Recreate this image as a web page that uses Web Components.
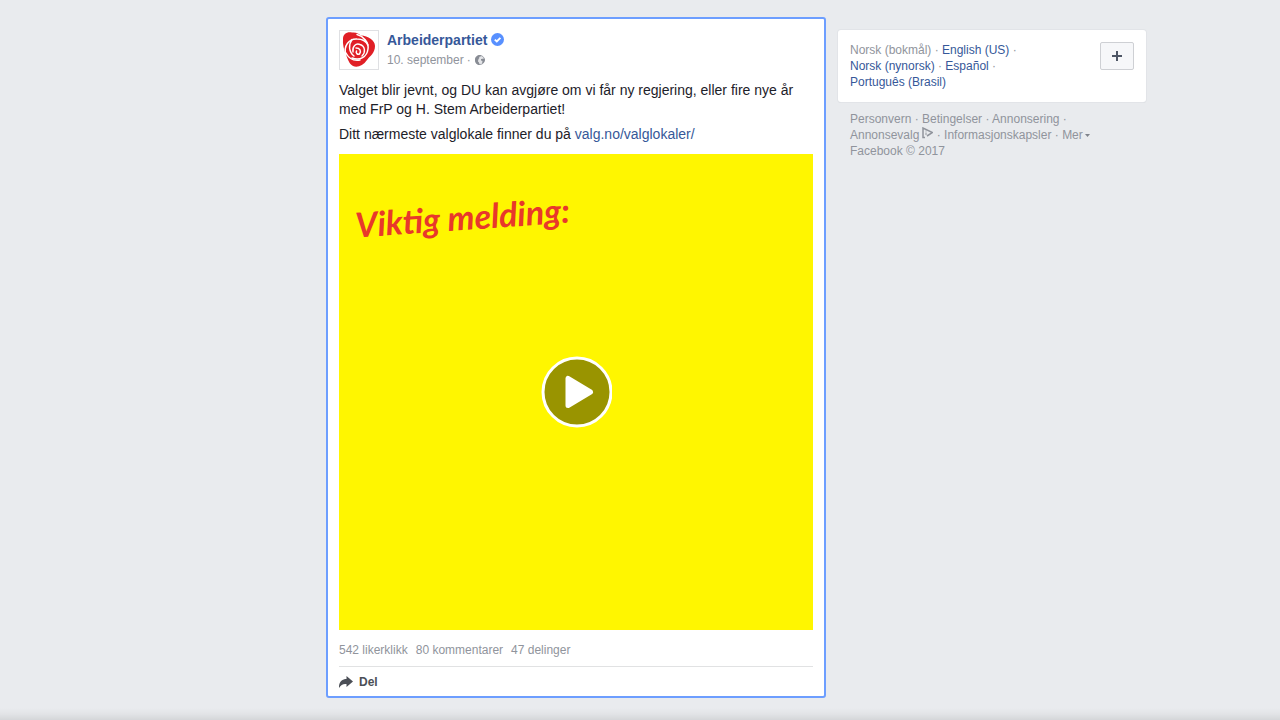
<!DOCTYPE html>
<html lang="nb">
<head>
<meta charset="utf-8">
<meta name="viewport" content="width=device-width, initial-scale=1">
<title>Arbeiderpartiet</title>
<style>
  html { background: #e9ebee; }
  body { margin: 0; font: 12px/16px "Liberation Sans", Arial, sans-serif; color: #1d2129; }
</style>
</head>
<body>
<post-page>
  <feed-post author="Arbeiderpartiet" date="10. september">
    <p>Valget blir jevnt, og DU kan avgjøre om vi får ny regjering, eller fire nye år med FrP og H. Stem Arbeiderpartiet!</p>
    <p>Ditt nærmeste valglokale finner du på <a href="#valg">valg.no/valglokaler/</a></p>
    <video-cover slot="media">Viktig melding:</video-cover>
    <span slot="stats">542 likerklikk</span>
    <span slot="stats">80 kommentarer</span>
    <span slot="stats">47 delinger</span>
  </feed-post>
  <language-card slot="side"></language-card>
  <site-links slot="side"></site-links>
</post-page>

<script>
class BaseElement extends HTMLElement {
  constructor() {
    super();
    this.attachShadow({ mode: 'open' }).innerHTML = this.constructor.markup;
  }
}

customElements.define('post-page', class extends BaseElement {
  static markup = `
    <style>
      :host { display: flex; flex-direction: column; min-height: 100vh; }
      .columns { flex: 1; display: flex; justify-content: center; align-items: flex-start; gap: 12px;
                 padding: 17px 0 0 192px; }
      main { flex: 0 1 500px; min-width: 0; }
      aside { flex: 0 1 308px; padding-top: 13px; }
      .edge { height: 12px; background: linear-gradient(rgba(0,0,0,0), rgba(0,0,0,.03) 50%, rgba(0,0,0,.09)); }
    </style>
    <div class="columns">
      <main><slot></slot></main>
      <aside><slot name="side"></slot></aside>
    </div>
    <div class="edge"></div>`;
});

customElements.define('party-logo', class extends BaseElement {
  static markup = `
    <style>
      :host { display: block; box-sizing: border-box; width: 40px; height: 40px; background: #fff; border: 1px solid #dfe0e3; }
      svg { display: block; width: 100%; height: 100%; }
    </style>
    <svg viewBox="1 1 38 38" aria-hidden="true">
      <path fill="#e01f26" d="M4 9C4 4 8 1.500 13 2.500C17 2 20 3.500 22 5.500C29 6 36 10 36 16C36 23 31 26 28 30C24 36 18 38 14 36C10 34 9 29 7 25C5 20 3.500 14 4 9Z"/>
      <g fill="none" stroke="#fff" stroke-linecap="round">
        <path stroke-width="1.500" d="M7 25C4 16 10 8.500 18 9C23 9 27 11 29 15"/>
        <path stroke-width="1.500" d="M18 4.500C24 6 30 12 29 19C28 27 21 31 13 28"/>
        <path stroke-width="1.400" d="M13 9.500C9 15 10 22 15 26"/>
        <path stroke-width="1.300" d="M7 23C10 29 15 31 21 30"/>
        <path stroke-width="1.400" d="M14 22C13 16 17 13 21 14.500C26 16 27 22 23 26"/>
        <path stroke-width="1.500" d="M17 18C21 18 22.500 21 20.500 24C18.500 25 16.500 23 17.500 21"/>
      </g>
    </svg>`;
});

customElements.define('video-cover', class extends BaseElement {
  static markup = `
    <style>
      :host { display: block; position: relative; aspect-ratio: 474 / 476; background: #fff600; overflow: hidden; }
      .caption { padding: 43px 0 0 16px; }
      .caption span { display: inline-block; font: italic 700 34px/40px Lato, "Liberation Sans", sans-serif; color: #e8382b;
                      transform: rotate(-4deg); }
      button { position: absolute; inset: 0; width: 100%; display: grid; place-items: center; padding: 0;
               border: 0; background: none; cursor: pointer; }
      svg { display: block; width: 72px; height: 72px; }
    </style>
    <div class="caption"><span><slot></slot></span></div>
    <button type="button" aria-label="Spill av">
      <svg viewBox="0 0 72 72" aria-hidden="true">
        <circle cx="37" cy="36" r="34" fill="#999400" stroke="#fff" stroke-width="3"/>
        <path fill="#fff" stroke="#fff" stroke-width="5" stroke-linejoin="round" d="M28 22.500V49.500L50.500 36Z"/>
      </svg>
    </button>`;
});

customElements.define('feed-post', class extends BaseElement {
  static markup = `
    <style>
      :host { display: block; box-sizing: border-box; background: #fff; border: 2px solid #6d9eff; border-radius: 3px;
              padding: 11px 11px 6px; }
      header { display: flex; gap: 8px; }
      a { text-decoration: none; color: inherit; }
      .name { display: flex; align-items: center; gap: 4px; font-size: 14px; line-height: 20px; font-weight: 700; color: #365899; }
      .date { display: flex; align-items: center; gap: 3px; line-height: 20px; color: #90949c; }
      svg { display: block; }
      .name svg { padding-bottom: 2px; }
      .text { font-size: 14px; line-height: 19px; margin: 11px 0 10px; }
      ::slotted(p) { margin: 0 0 6px; }
      ::slotted(p:last-of-type) { margin: 0; }
      .stats { display: flex; gap: 8px; padding: 12px 0 8px; color: #90949c; border-bottom: 1px solid #e1e2e3; }
      button { display: flex; align-items: center; gap: 6px; margin: 7px 0 0; padding: 0; border: 0; background: none;
               font: 700 12px/16px "Liberation Sans", Arial, sans-serif; color: #4b4f56; cursor: pointer; }
    </style>
    <article>
      <header>
        <party-logo></party-logo>
        <div>
          <div class="name"><a href="#author"></a>
            <svg width="13" height="13" viewBox="0 0 13 13" aria-hidden="true">
              <circle cx="6.500" cy="6.500" r="6.500" fill="#5890ff"/>
              <path d="M3.800 6.600L5.800 8.500L9.400 4.800" fill="none" stroke="#fff" stroke-width="1.900"/>
            </svg>
          </div>
          <div class="date"><a href="#date"></a><span>·</span>
            <svg width="12" height="12" viewBox="0 0 12 12" aria-hidden="true">
              <circle cx="6" cy="6" r="4.500" fill="#e4e5e8" stroke="#a3a6ad" stroke-width="1"/>
              <path fill="#888c94" d="M6.500 1C3 1 1 3 1 6C1 9 3 11 6 11C5 10 5.500 8.500 4 7.500C4 6 4.500 4.500 5.500 4L5 3L7.500 2ZM7 5L10.500 4.500L11 6L9.500 9L8 9.500L8.500 7L7 6.500Z"/>
            </svg>
          </div>
        </div>
      </header>
      <div class="text"><slot></slot></div>
      <slot name="media"></slot>
      <div class="stats"><slot name="stats"></slot></div>
      <button type="button">
        <svg width="14" height="12" viewBox="0 0 14 12" aria-hidden="true">
          <path fill="#4b4f56" d="M7.500 0L14 5.500L7.500 11V8C4.500 7.500 2 8.500 0 12C-.5 6.500 3 3 7.500 3Z"/>
        </svg>
        <span>Del</span>
      </button>
    </article>`;
  connectedCallback() {
    this.shadowRoot.querySelector('.name a').textContent = this.getAttribute('author');
    this.shadowRoot.querySelector('.date a').textContent = this.getAttribute('date');
    for (const link of this.querySelectorAll('a')) {
      link.style.color = '#365899';
      link.style.textDecoration = 'none';
    }
  }
});

customElements.define('language-card', class extends BaseElement {
  static markup = `
    <style>
      :host { display: flex; gap: 12px; justify-content: space-between; align-items: flex-start; padding: 12px;
              background: #fff; border-radius: 3px; box-shadow: 0 0 0 1px #e2e4e8, 0 1px 0 #cfd1d5; color: #90949c; }
      a { color: #365899; text-decoration: none; white-space: nowrap; }
      button { flex: none; display: grid; place-items: center; box-sizing: border-box; width: 34px; height: 28px; padding: 0;
               border: 1px solid #ced0d4; border-radius: 2px; background: #f6f7f9; cursor: pointer; }
    </style>
    <div>Norsk (bokmål) · <a href="#en">English (US)</a> · <a href="#nn">Norsk (nynorsk)</a> · <a href="#es">Español</a> · <a href="#pt">Português (Brasil)</a></div>
    <button type="button" aria-label="Flere språk">
      <svg width="10" height="10" viewBox="0 0 10 10" aria-hidden="true"><path fill="#4e5665" d="M4 0H6V4H10V6H6V10H4V6H0V4H4Z"/></svg>
    </button>`;
});

customElements.define('site-links', class extends BaseElement {
  static markup = `
    <style>
      :host { display: block; padding: 9px 12px; color: #90949c; }
      a { color: inherit; text-decoration: none; white-space: nowrap; }
      .choices { margin-left: 2px; vertical-align: 0; }
      .more { margin-left: 2px; vertical-align: 2px; }
    </style>
    <div><a href="#privacy">Personvern</a> · <a href="#terms">Betingelser</a> · <a href="#ads">Annonsering</a> · <a href="#choices">Annonsevalg<svg class="choices" width="12" height="12" viewBox="0 0 12 12" aria-hidden="true"><path d="M4 10.500H2V1L11.500 5.500L6 9" fill="none" stroke="#90949c" stroke-width="1.500"/><path d="M5 3.500V4.500M5 5.500V8" stroke="#90949c" stroke-width="1"/></svg></a> · <a href="#cookies">Informasjonskapsler</a> · <a href="#more">Mer<svg class="more" width="5" height="3" viewBox="0 0 5 3" aria-hidden="true"><path d="M0 0H5L2.500 3Z" fill="#7f838b"/></svg></a></div>
    <div>Facebook © 2017</div>`;
});
</script>
</body>
</html>
